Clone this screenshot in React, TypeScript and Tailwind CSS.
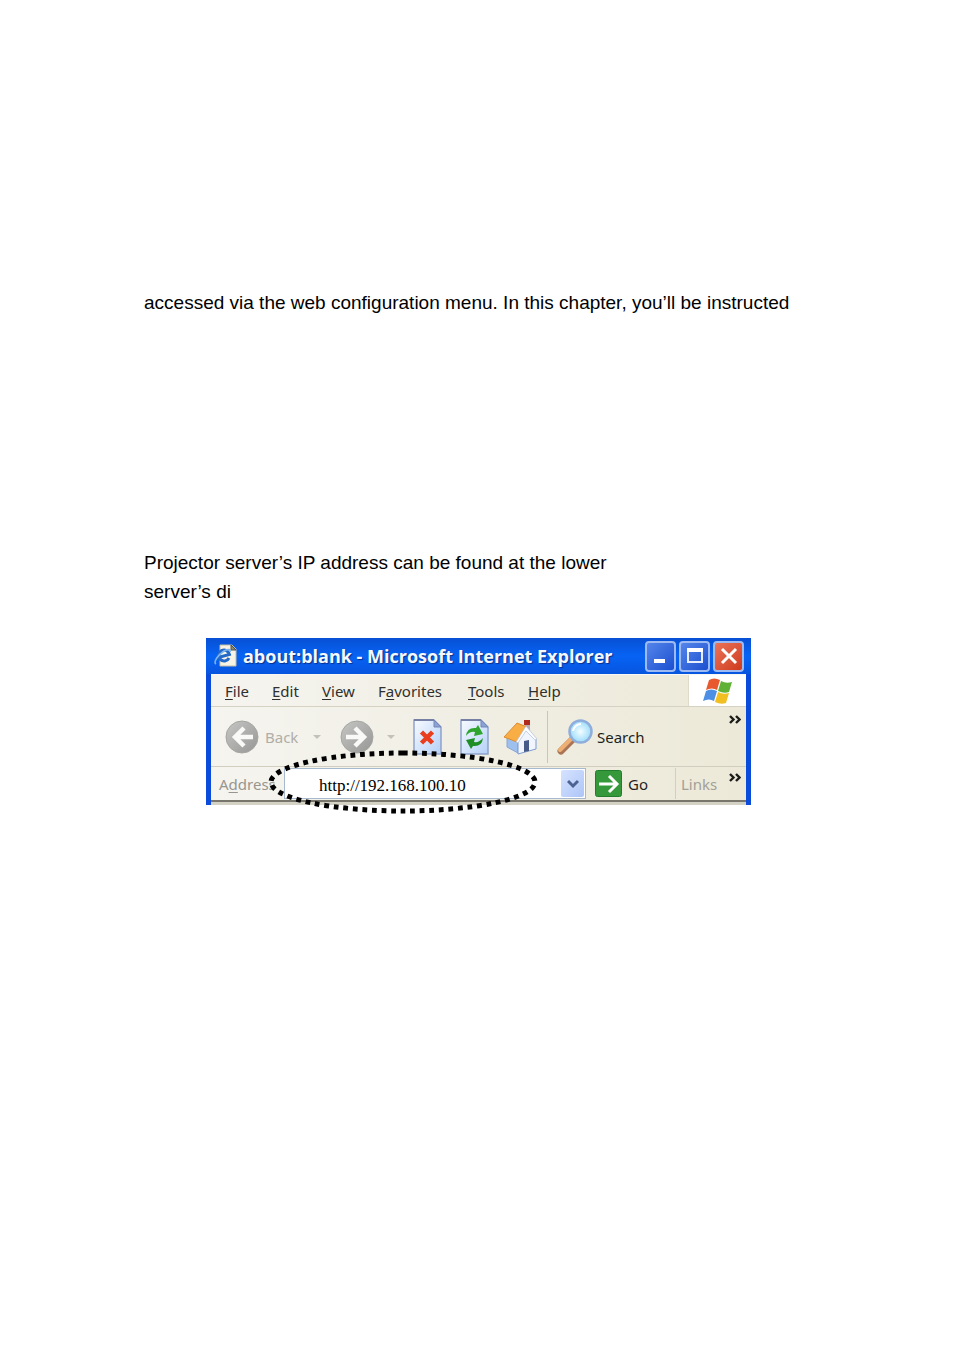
import React from "react";

const menus = [
  { before: "", key: "F", after: "ile", width: "w-[47px]" },
  { before: "", key: "E", after: "dit", width: "w-[50px]" },
  { before: "", key: "V", after: "iew", width: "w-[56px]" },
  { before: "F", key: "a", after: "vorites", width: "w-[90px]" },
  { before: "", key: "T", after: "ools", width: "w-[60px]" },
  { before: "", key: "H", after: "elp", width: "w-[50px]" },
];

function PageIcon() {
  return (
    <svg className="h-6 w-6 shrink-0" viewBox="0 0 24 24" aria-hidden="true">
      <path d="M6 1h12l4 4v17H6z" fill="#f7f4e6" stroke="#c2bda2" />
      <path d="M17 1v5h5z" fill="#8d8a72" stroke="#4e5052" />
      <path d="M15 14a5.5 5.5 0 1 1 .5-3.5L6 13" fill="none" stroke="#2468c8" strokeWidth="3" />
      <path d="M2 20c-3-2 2-9 8-13 4-2 7-2 6 1" fill="none" stroke="#79b4ee" strokeWidth="1.6" />
    </svg>
  );
}

function ArrowCircle({ forward = false }: { forward?: boolean }) {
  return (
    <svg className="h-[34px] w-[34px] shrink-0" viewBox="0 0 34 34" aria-hidden="true">
      <defs>
        <linearGradient id={forward ? "discF" : "discB"} x2="1" y2="1">
          <stop stopColor="#c6c6c4" />
          <stop offset="1" stopColor="#969695" />
        </linearGradient>
      </defs>
      <circle cx="17" cy="17" r="16" fill={forward ? "url(#discF)" : "url(#discB)"} stroke="#a5a5a2" />
      <path
        d={forward ? "M6 17h18M15 8l9 9-9 9" : "M28 17H10M19 8l-9 9 9 9"}
        fill="none"
        stroke="#f9f9f7"
        strokeWidth="4.5"
      />
    </svg>
  );
}

function Caret() {
  return (
    <svg className="h-2 w-2 shrink-0" viewBox="0 0 8 8" aria-hidden="true">
      <path d="M0 2h8L4 6z" fill="#c3c1b8" />
    </svg>
  );
}

function Sheet({ children }: { children: React.ReactNode }) {
  return (
    <svg className="h-9 w-[29px]" viewBox="0 0 29 36" aria-hidden="true">
      <defs>
        <linearGradient id="sheet" x2="1" y2="1">
          <stop stopColor="#f8fbff" />
          <stop offset="1" stopColor="#b4d0f8" />
        </linearGradient>
      </defs>
      <path d="M1 1h20l7 7v27H1z" fill="url(#sheet)" stroke="#8fa3cb" strokeWidth="1.5" />
      <path d="M1 1h20" stroke="#7680a4" strokeWidth="2" />
      <path d="M21 1v7h7z" fill="#8ba3d4" stroke="#7387b8" />
      {children}
    </svg>
  );
}

function HomeIcon() {
  return (
    <svg className="h-9 w-[35px]" viewBox="0 0 35 36" aria-hidden="true">
      <path d="M22 3h5v11h-5z" fill="#b9aab8" />
      <path d="M21 1h6v5h-6z" fill="#b02a1e" />
      <path d="M4 18l11 4v12L4 28z" fill="#9dc0ef" stroke="#88a6d2" />
      <path d="M15 21l8-12 10 11v10l-18 5z" fill="#f0f5ff" stroke="#7f9bcd" />
      <path d="M1 18L14 4l10 4-10 15z" fill="#f9ae45" stroke="#dc8c2d" />
      <path d="M23 7l11 13-2 1-9-9-8 12-2-1z" fill="#fbfcff" stroke="#a8b7d2" strokeWidth=".6" />
      <path d="M21 22l5-1v11l-5 1z" fill="#465a88" />
    </svg>
  );
}

function SearchIcon() {
  return (
    <svg className="h-9 w-9 shrink-0" viewBox="0 0 36 36" aria-hidden="true">
      <defs>
        <radialGradient id="lens">
          <stop stopColor="#f4fdff" />
          <stop offset="1" stopColor="#9bdcfb" />
        </radialGradient>
      </defs>
      <path d="M4 32l12-12" stroke="#a97555" strokeWidth="7" strokeLinecap="round" />
      <path d="M3 31l12-12" stroke="#eeaf75" strokeWidth="4" strokeLinecap="round" />
      <circle cx="23.5" cy="12.5" r="11" fill="url(#lens)" stroke="#8faedb" strokeWidth="2.5" />
      <path d="M16 12a8 8 0 0 1 8-7" fill="none" stroke="#fff" strokeWidth="2" />
    </svg>
  );
}

function WindowsFlag() {
  return (
    <svg className="h-7 w-8" viewBox="0 0 32 28" aria-hidden="true">
      <path d="M7 3q5-3 11 0l-3 10q-5-3-11 0z" fill="#e8592f" />
      <path d="M19 4q5 3 11 1l-3 10q-5 2-11-1z" fill="#61b136" />
      <path d="M4 14q5-3 11 0l-3 10q-5-3-11 0z" fill="#4c8fe4" />
      <path d="M16 15q5 3 11 1l-3 10q-5 2-11-1z" fill="#f2bf22" />
    </svg>
  );
}

function Chevrons() {
  return (
    <svg className="h-[9px] w-3" viewBox="0 0 12 9" aria-hidden="true">
      <path d="M1 1l3.5 3.5L1 8M7 1l3.5 3.5L7 8" fill="none" stroke="#1c1c1a" strokeWidth="2.4" />
    </svg>
  );
}

const captionButton =
  "flex h-[31px] w-[31px] items-center justify-center rounded-[4px] border-2 border-[#9dbaf3]";

function BrowserWindow() {
  return (
    <section
      aria-label="Internet Explorer"
      className="relative w-full max-w-[545px] bg-[#0b4bdc] px-[5px] font-['Noto_Sans','Open_Sans',sans-serif] text-[15px] leading-5 text-[#30302e]"
    >
      <header className="-mx-[5px] flex h-9 items-center bg-linear-to-b from-[#0750d4] via-[#0763f4] to-[#0755df] pl-2 pr-[7px]">
        <PageIcon />
        <h1 className="ml-[5px] flex-1 whitespace-nowrap font-['Open_Sans','Noto_Sans',sans-serif] text-[18px] font-bold text-[#f4f8ff] [text-shadow:1px_1px_1px_#0b2f8c]">
          about:blank - Microsoft Internet Explorer
        </h1>
        <div className="flex gap-[3px]">
          <button aria-label="Minimize" className={`${captionButton} bg-linear-to-br from-[#5584ea] to-[#1b4fd0]`}>
            <svg className="h-5 w-5" viewBox="0 0 20 20">
              <path d="M3 15h11" stroke="#fff" strokeWidth="4" />
            </svg>
          </button>
          <button aria-label="Maximize" className={`${captionButton} bg-linear-to-br from-[#5584ea] to-[#1b4fd0]`}>
            <svg className="h-5 w-5" viewBox="0 0 20 20">
              <path d="M3 3v13h14V3z" fill="none" stroke="#e5eeff" strokeWidth="2" />
              <path d="M2 4h16" stroke="#fff" strokeWidth="4" />
            </svg>
          </button>
          <button aria-label="Close" className={`${captionButton} bg-linear-to-br from-[#ea7258] to-[#cf3a1b]`}>
            <svg className="h-5 w-5" viewBox="0 0 20 20">
              <path d="M3 3l14 14M17 3L3 17" stroke="#fff" strokeWidth="3" />
            </svg>
          </button>
        </div>
      </header>

      <div className="bg-linear-to-r from-[#f5f4ef] to-[#ece9d8]">
        <nav className="flex h-[33px] items-stretch border-b border-[#d5d2c4] border-t border-t-[#f8f7f2]">
          <div className="flex flex-1 items-center border-r border-[#dedbcd] pl-[14px]">
            {menus.map((menu) => (
              <button key={menu.key} className={`${menu.width} shrink-0 text-left`}>
                {menu.before}
                <span className="underline underline-offset-2">{menu.key}</span>
                {menu.after}
              </button>
            ))}
          </div>
          <div className="flex w-[57px] items-center justify-center bg-white">
            <WindowsFlag />
          </div>
        </nav>

        <div className="flex h-[60px] items-center border-b border-[#d2cebf] pl-[14px]">
          <button className="flex w-[115px] items-center text-[#b0aea8]">
            <ArrowCircle />
            <span className="ml-[6px] w-12 text-left">Back</span>
            <Caret />
          </button>
          <button aria-label="Forward" className="flex w-[73px] items-center gap-[13px]">
            <ArrowCircle forward />
            <Caret />
          </button>
          <button aria-label="Stop" className="w-[47px]">
            <Sheet>
              <path d="M8.5 13l11 11M19.5 13l-11 11" stroke="#ea3c1e" strokeWidth="4.5" />
            </Sheet>
          </button>
          <button aria-label="Refresh" className="w-[43px]">
            <Sheet>
              <path d="M6 17Q7 8 16 9l2-3 5 9-9 2 1-4q-5-1-9 4z" fill="#2fa52e" />
              <path d="M23 19q-1 9-10 8l-2 3-5-9 9-2-1 4q5 1 9-4z" fill="#1f8f25" />
            </Sheet>
          </button>
          <button aria-label="Home" className="w-[44px]">
            <HomeIcon />
          </button>
          <div className="h-[52px] w-[10px] border-l border-[#cac6b7]" />
          <button className="flex flex-1 items-center gap-1 text-[#1f1f1d]">
            <SearchIcon />
            Search
          </button>
          <button aria-label="More toolbar buttons" className="mb-[34px] mr-[5px]">
            <Chevrons />
          </button>
        </div>

        <form className="flex h-[33px] items-center pl-2" onSubmit={(event) => event.preventDefault()}>
          <label htmlFor="address" className="w-[65px] text-[#98968f]">
            A<span className="underline underline-offset-2">d</span>dress
          </label>
          <div className="flex h-[31px] min-w-0 flex-1 border border-[#a7b9cf] bg-white">
            <input
              id="address"
              defaultValue="http://192.168.100.10"
              className="min-w-0 flex-1 bg-white pl-[34px] pt-1 font-['Liberation_Serif',serif] text-[17px] text-black outline-none"
            />
            <button
              type="button"
              aria-label="Show address list"
              className="m-px flex w-[23px] items-center justify-center rounded-[2px] bg-linear-to-br from-[#d6e3ff] to-[#adc5f7]"
            >
              <svg className="h-3 w-3" viewBox="0 0 12 12">
                <path d="M1 3l5 5 5-5" fill="none" stroke="#4c6391" strokeWidth="3" />
              </svg>
            </button>
          </div>
          <button className="ml-[9px] flex w-[80px] items-center gap-[6px] text-[#1f1f1d]">
            <svg className="h-[27px] w-[27px]" viewBox="0 0 27 27" aria-hidden="true">
              <rect x=".5" y=".5" width="26" height="26" rx="2" fill="#35983b" stroke="#237d2c" />
              <path d="M4 14h17M14 6l8 8-8 8" fill="none" stroke="#fff" strokeWidth="3" />
            </svg>
            Go
          </button>
          <div className="flex h-[31px] w-[54px] items-center border-l border-[#d3cfbe] pl-[5px] text-[#a3a097]">Links</div>
          <button type="button" aria-label="More links" className="mb-3 mr-[5px]">
            <Chevrons />
          </button>
        </form>
        <div className="h-[5px] border-t-2 border-[#77756c] bg-[#d4d1c5]" />
      </div>

      <svg
        className="pointer-events-none absolute left-[60px] top-[110px] h-[68px] w-[274px]"
        viewBox="0 0 274 68"
        aria-hidden="true"
      >
        <path
          d="M137 5A132 29 0 0 1 137 63A132 29 0 0 1 137 5"
          pathLength="585"
          fill="none"
          stroke="#000"
          strokeWidth="5"
          strokeDasharray="5 5"
        />
      </svg>
    </section>
  );
}

export default function App() {
  return (
    <main className="min-h-screen bg-white px-36 pb-24 pt-72 font-['Liberation_Sans',Arial,sans-serif] text-[19px] leading-[29px] text-black">
      <p className="whitespace-nowrap">
        accessed via the web configuration menu. In this chapter, you’ll be instructed
      </p>
      <p className="mt-[231px]">
        Projector server’s IP address can be found at the lower
        <br />
        server’s di
      </p>
      <div className="mt-8 pl-[62px]">
        <BrowserWindow />
      </div>
    </main>
  );
}
